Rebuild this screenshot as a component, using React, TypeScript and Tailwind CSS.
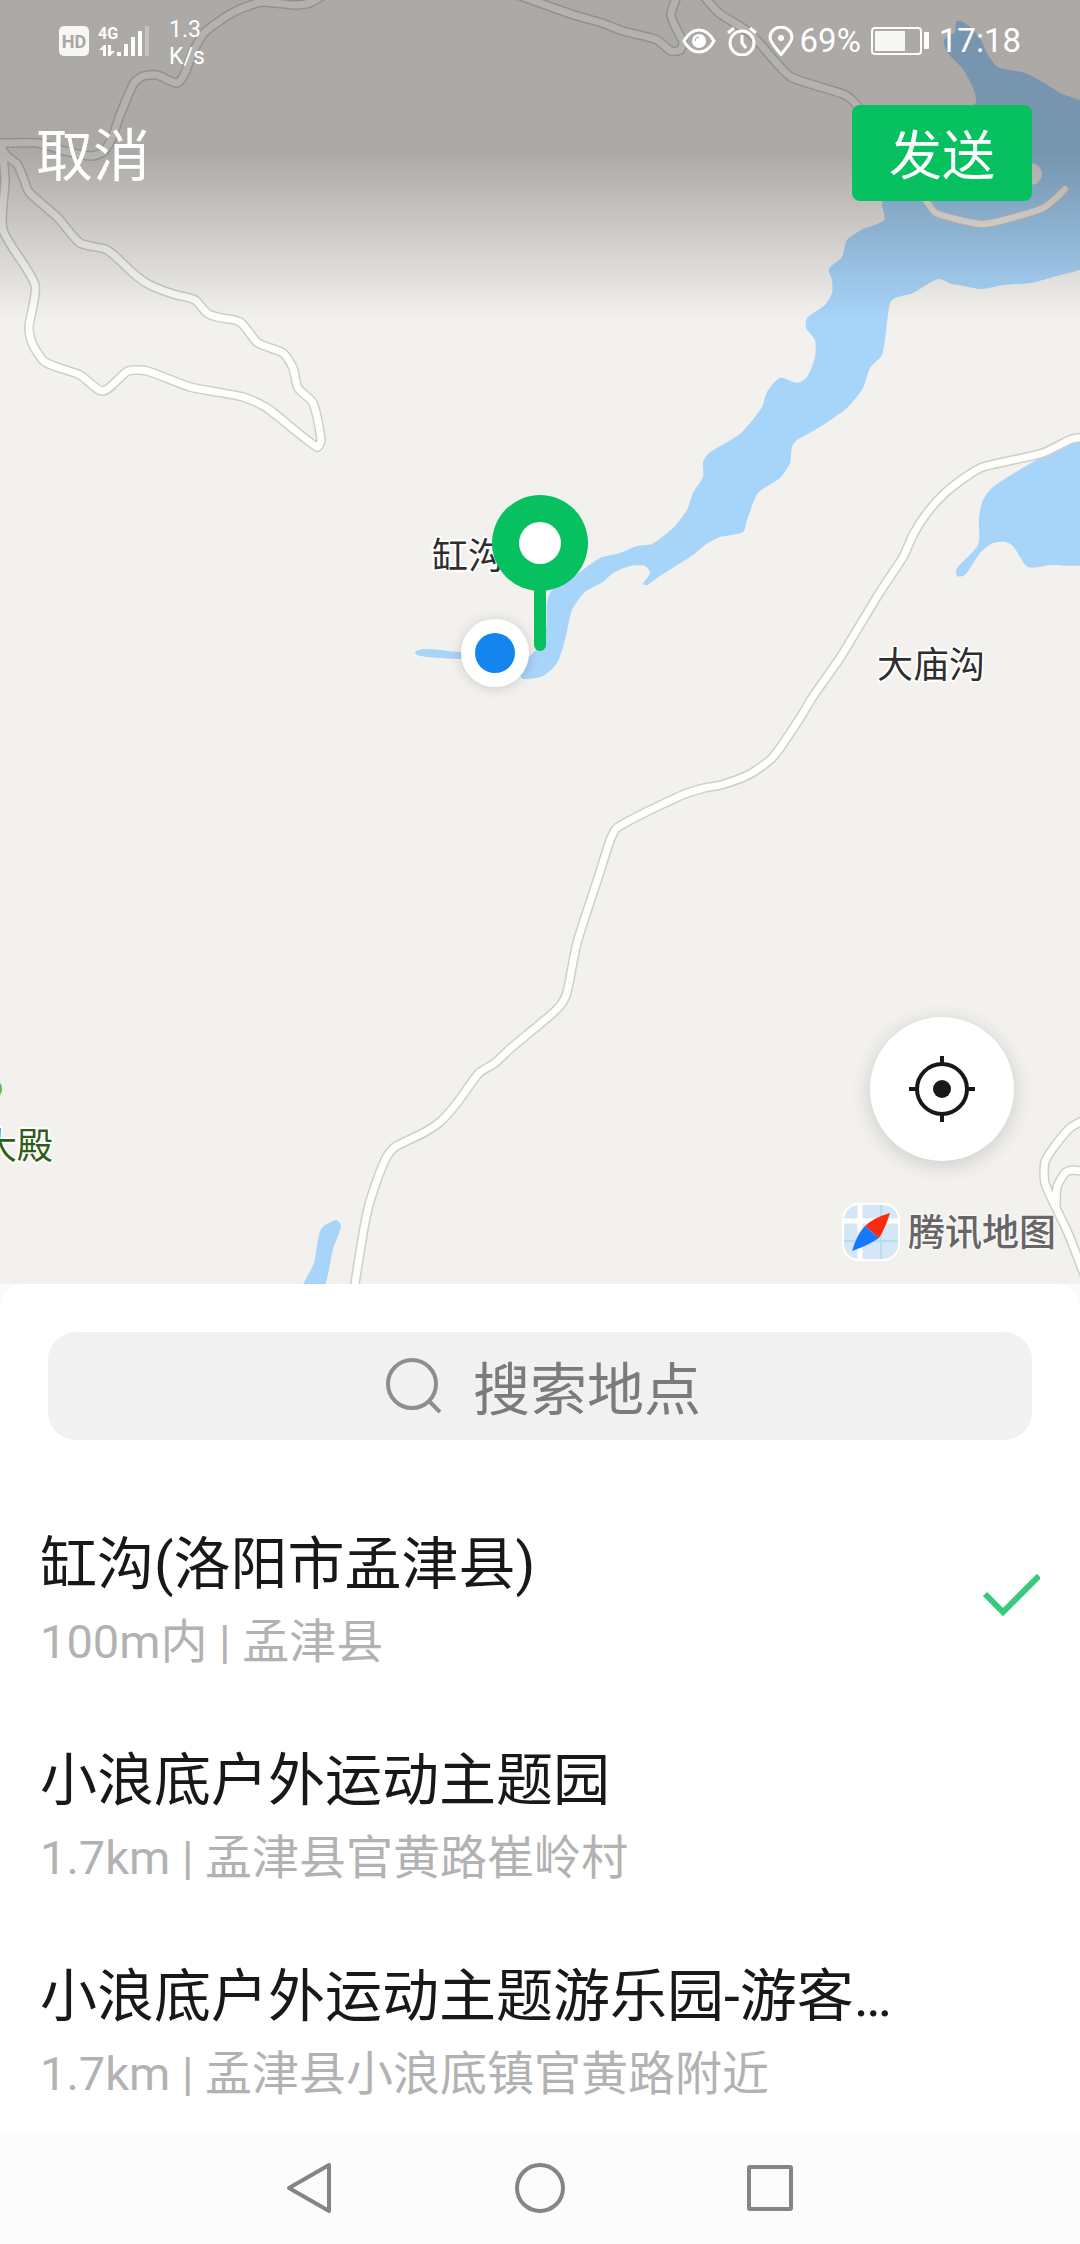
import { useState } from "react"

type Point = [number, number]

const places = [
  { id: 1, name: "缸沟(洛阳市孟津县)", detail: "100m内 | 孟津县" },
  { id: 2, name: "小浪底户外运动主题园", detail: "1.7km | 孟津县官黄路崔岭村" },
  { id: 3, name: "小浪底户外运动主题游乐园-游客…", detail: "1.7km | 孟津县小浪底镇官黄路附近" },
]

const roads: Point[][] = [
  [[-10, 143], [15, 143], [38, 143], [65, 151], [91, 156], [103, 152], [112, 138], [120, 115], [134, 83], [143, 76], [157, 75], [177, 83], [184, 75], [193, 52], [205, 32], [234, 12], [262, 2], [293, 5], [310, 3], [325, -6]],
  [[-4, 140], [7, 156], [17, 164], [23, 177], [29, 192], [58, 218], [80, 243], [105, 249], [115, 256], [133, 273], [148, 284], [173, 294], [195, 300], [207, 313], [217, 317], [240, 322], [258, 343], [283, 353], [293, 368], [298, 388], [313, 403], [321, 440], [317, 447], [267, 408], [243, 397], [190, 387], [147, 371], [128, 371], [103, 391], [80, 375], [45, 362], [32, 343], [29, 327], [35, 285], [3, 230], [5, 180], [2, 146]],
  [[515, -6], [540, 3], [574, 15], [602, 23], [623, 31], [657, 40], [671, 51], [680, 50], [683, 42], [678, 32], [671, 15], [677, -4]],
  [[702, -6], [719, 13], [750, 33], [774, 60], [791, 77], [843, 94], [852, 100], [870, 120]],
  [[1090, 437], [1072, 439], [1043, 453], [983, 467], [967, 476], [945, 493], [927, 513], [913, 535], [903, 557], [880, 592], [857, 630], [840, 658], [812, 698], [800, 718], [773, 757], [750, 774], [721, 785], [704, 788], [680, 796], [618, 827], [611, 838], [598, 878], [577, 943], [568, 988], [564, 1000], [554, 1012], [511, 1048], [495, 1063], [479, 1073], [457, 1103], [441, 1121], [425, 1132], [395, 1147], [386, 1158], [371, 1198], [364, 1228], [354, 1290]],
  [[1090, 1117], [1070, 1128], [1054, 1147], [1045, 1162], [1045, 1183], [1058, 1212], [1068, 1233], [1084, 1274]],
  [[1056, 1206], [1057, 1187], [1065, 1173], [1072, 1170], [1086, 1172]],
]

const waters: Point[][] = [
  [[957, 21], [969, 26], [981, 40], [988, 55], [998, 67], [1025, 73], [1046, 84], [1060, 93], [1090, 108], [1090, 262], [1053, 277], [1030, 283], [1003, 285], [982, 289], [963, 286], [952, 284], [938, 279], [913, 293], [895, 298], [890, 303], [887, 323], [882, 355], [870, 368], [863, 388], [847, 408], [820, 427], [797, 440], [792, 447], [790, 463], [780, 478], [758, 493], [747, 520], [743, 532], [720, 537], [705, 545], [693, 555], [660, 576], [647, 585], [643, 584], [650, 573], [645, 566], [630, 566], [613, 573], [603, 582], [585, 592], [572, 610], [565, 640], [557, 663], [543, 676], [523, 679], [520, 673], [528, 658], [538, 648], [546, 630], [547, 603], [552, 590], [580, 572], [600, 558], [620, 553], [637, 546], [652, 544], [673, 528], [687, 510], [693, 493], [703, 477], [703, 462], [709, 453], [741, 433], [762, 407], [767, 392], [780, 378], [797, 383], [807, 377], [815, 357], [815, 340], [806, 328], [807, 318], [825, 305], [832, 293], [832, 280], [829, 269], [842, 257], [847, 240], [863, 229], [884, 220], [882, 203], [900, 150], [975, 104], [965, 72], [948, 53], [944, 40], [955, 32]],
  [[1090, 440], [1067, 446], [1033, 462], [993, 487], [983, 500], [979, 517], [978, 545], [957, 568], [957, 576], [965, 575], [980, 553], [993, 543], [1005, 542], [1013, 546], [1028, 567], [1050, 565], [1090, 561]],
  [[415, 653], [425, 649], [460, 652], [480, 652], [480, 659], [427, 657]],
  [[321, 1229], [336, 1220], [341, 1226], [333, 1249], [322, 1292], [302, 1292], [314, 1263]],
]

const causeway: Point[] = [[920, 190], [927, 202], [936, 213], [982, 224], [1015, 217], [1043, 208], [1056, 198], [1065, 189]]

// Smooth curve that runs through every point
function curve(points: Point[], closed = false) {
  const n = points.length
  const at = (i: number) => (closed ? points[(i + n) % n] : points[Math.max(0, Math.min(n - 1, i))])
  let d = `M${points[0][0]} ${points[0][1]}`
  for (let i = 0; i < (closed ? n : n - 1); i++) {
    const [a, b, c, e] = [at(i - 1), at(i), at(i + 1), at(i + 2)]
    const limit = Math.hypot(c[0] - b[0], c[1] - b[1]) / 4.5
    const t1 = Math.hypot(c[0] - a[0], c[1] - a[1]) || 1
    const t2 = Math.hypot(e[0] - b[0], e[1] - b[1]) || 1
    const x1 = b[0] + ((c[0] - a[0]) / t1) * limit
    const y1 = b[1] + ((c[1] - a[1]) / t1) * limit
    const x2 = c[0] - ((e[0] - b[0]) / t2) * limit
    const y2 = c[1] - ((e[1] - b[1]) / t2) * limit
    d += `C${x1.toFixed(1)} ${y1.toFixed(1)} ${x2.toFixed(1)} ${y2.toFixed(1)} ${c[0]} ${c[1]}`
  }
  return closed ? d + "Z" : d
}

function MapCanvas() {
  return (
    <svg
      className="absolute inset-0 h-full w-full"
      viewBox="0 0 1080 1284"
      preserveAspectRatio="xMidYMid slice"
      role="img"
      aria-label="地图"
    >
      <defs>
        <linearGradient id="shade" x1="0" y1="0" x2="0" y2="1">
          <stop offset="0" stopColor="#060200" stopOpacity="0.3" />
          <stop offset="0.48" stopColor="#060200" stopOpacity="0.3" />
          <stop offset="1" stopColor="#060200" stopOpacity="0" />
        </linearGradient>
        <filter id="glow" x="-50%" y="-50%" width="200%" height="200%">
          <feDropShadow dx="0" dy="1" stdDeviation="6" floodOpacity="0.18" />
        </filter>
      </defs>
      <rect width="1080" height="1284" fill="#f3f1ee" />
      <g fill="#a7d4f9">
        {waters.map((points, index) => (
          <path key={index} d={curve(points, true)} />
        ))}
      </g>
      <ellipse cx="1030" cy="174" rx="12" ry="11" fill="#f3f1ee" />
      <g fill="none" strokeLinecap="round" strokeLinejoin="round">
        <path d={curve(causeway)} stroke="#d9cfc8" strokeWidth="8" />
        <path d={curve(causeway)} stroke="#f7f3ef" strokeWidth="6" />
        {roads.map((points, index) => (
          <path key={index} d={curve(points)} stroke="#cfcecb" strokeWidth="10" />
        ))}
        {roads.map((points, index) => (
          <path key={index} d={curve(points)} stroke="#fefefb" strokeWidth="7" />
        ))}
      </g>
      <rect width="1080" height="320" fill="url(#shade)" />
      <g
        className="font-['Noto_Sans_CJK_SC',sans-serif] text-[36px]"
        fill="#2e2e2e"
        stroke="#ffffff"
        strokeWidth="4"
        strokeLinejoin="round"
        paintOrder="stroke"
      >
        <text x="432" y="569">缸沟</text>
        <text x="877" y="678">大庙沟</text>
        <text x="-19" y="1159" fill="#2f5c17">大殿</text>
      </g>
      <circle cx="-9" cy="1089" r="11" fill="#5cb85a" />
      <circle cx="495" cy="653" r="34" fill="#ffffff" filter="url(#glow)" />
      <circle cx="495" cy="653" r="20" fill="#1485ef" />
      <path d="M540 570V645" stroke="#07c160" strokeWidth="12" strokeLinecap="round" />
      <circle cx="540" cy="543" r="48" fill="#07c160" />
      <circle cx="540" cy="543" r="21" fill="#ffffff" />
    </svg>
  )
}

function StatusBar() {
  return (
    <div className="flex h-[82px] items-center justify-between pr-[59px] pl-[59px] font-[Roboto,sans-serif] text-white">
      <div className="flex items-center">
        <svg className="h-[30px] w-[92px] overflow-visible" viewBox="0 0 92 30" fill="currentColor">
          <rect width="30" height="30" rx="5" fill="#f7f7f5" />
          <text x="15" y="22" textAnchor="middle" className="text-[18px] font-bold" fill="#a9a6a3">HD</text>
          <text x="39" y="13" className="text-[16px] font-bold">4G</text>
          <path d="M40 24l5-5h2v11h-3v-6zM49 19h3v6h4l-5 5h-2z" />
          <path d="M58 26h4v4h-4zM65 18h4v12h-4zM72 11h4v19h-4zM79 5h4v25h-4z" />
          <path d="M86 0h4v30h-4z" opacity="0.3" />
        </svg>
        <div className="ml-[18px] pt-1 text-[23px] leading-[27px]">
          <div>1.3</div>
          <div>K/s</div>
        </div>
      </div>
      <div className="flex items-center text-[33px] leading-10">
        <svg className="h-[30px] w-[114px]" viewBox="0 0 114 30" fill="none" stroke="currentColor" strokeWidth="3">
          <path d="M2 15Q8 4 17 4Q26 4 32 15Q26 26 17 26Q8 26 2 15Z" />
          <circle cx="17" cy="15" r="7" fill="currentColor" stroke="none" />
          <path d="M13 15a4 4 0 0 1 4-4" stroke="#a9a6a3" strokeWidth="1" />
          <circle cx="60" cy="17" r="12" />
          <path d="M60 9v8l4 5M46 7l6-5M74 7l-6-5" />
          <path d="M99 28.500C93 21 88 16 88 11.500a11 10.500 0 0 1 22 0C110 16 105 21 99 28.500Z" />
          <circle cx="99" cy="12" r="3" fill="currentColor" stroke="none" />
        </svg>
        <span className="ml-1">69%</span>
        <svg className="ml-[10px] h-7 w-[58px]" viewBox="0 0 58 28" fill="none">
          <rect x="1" y="1" width="49" height="26" rx="3" stroke="white" strokeWidth="2" />
          <rect x="4" y="4" width="30" height="20" fill="#f7f7f5" />
          <rect x="53" y="5" width="5" height="17" rx="1" fill="white" />
        </svg>
        <span className="ml-[10px]">17:18</span>
      </div>
    </div>
  )
}

function MapLogo() {
  return (
    <svg className="size-[58px]" viewBox="0 0 58 58">
      <rect width="58" height="58" rx="17" fill="#ffffff" />
      <rect x="2" y="2" width="54" height="54" rx="15" fill="#d5e6f7" />
      <path d="M39 2V56M2 38H56" stroke="#b7dfe8" strokeWidth="2" />
      <path d="M18 2V56M2 18H56" stroke="#ffffff" strokeWidth="5" />
      <path d="M48 10Q31 15 23 23L37 35Q43 26 48 10Z" fill="#fa2c0c" />
      <path d="M10 48Q15 31 23 23L37 35Q27 42 10 48Z" fill="#1677ff" />
    </svg>
  )
}

export default function App() {
  const [selected, setSelected] = useState(1)

  return (
    <main className="flex min-h-screen flex-col bg-[#fafafa] font-[Roboto,'Noto_Sans_CJK_SC',sans-serif]">
      <section className="relative flex flex-1 flex-col overflow-hidden bg-[#f3f1ee]">
        <MapCanvas />
        <div className="relative flex flex-1 flex-col">
          <StatusBar />
          <header className="mt-[23px] flex h-24 items-center justify-between pr-12 pl-9 text-white">
            <button type="button" className="pt-2 text-[57px] leading-[72px]">取消</button>
            <button type="button" className="h-24 w-[180px] rounded-lg bg-[#07c160] pt-2 text-[53px] leading-[72px]">发送</button>
          </header>
          <div className="mt-auto flex flex-col items-end gap-[42px] pr-6 pb-[23px]">
            <button
              type="button"
              aria-label="回到当前位置"
              className="mr-[42px] flex size-36 items-center justify-center rounded-full bg-white shadow-[0_4px_20px_rgba(0,0,0,0.16)]"
            >
              <svg className="size-[66px]" viewBox="0 0 66 66" fill="none" stroke="#181818" strokeWidth="4">
                <circle cx="33" cy="33" r="25" strokeWidth="4" />
                <circle cx="33" cy="33" r="9" fill="#181818" stroke="none" />
                <path d="M33 0V8M33 58V66M0 33H8M58 33H66" />
              </svg>
            </button>
            <div className="flex items-center gap-2">
              <MapLogo />
              <span className="pt-1 text-[37px] leading-[54px] font-medium text-[#666] [text-shadow:0_0_3px_white,0_0_3px_white]">腾讯地图</span>
            </div>
          </div>
        </div>
      </section>

      <section className="rounded-t-3xl bg-white px-10">
        <label className="mx-2 mt-12 flex h-[108px] items-center justify-center gap-8 rounded-[28px] bg-[#f1f1f1]">
          <svg className="size-16 text-[#8e8e8e]" viewBox="0 0 64 64" fill="none" stroke="currentColor" strokeWidth="4">
            <circle cx="35" cy="30" r="24" />
            <path d="M52 47L63 58" />
          </svg>
          <input
            type="text"
            aria-label="搜索地点"
            placeholder="搜索地点"
            className="h-[88px] w-[230px] bg-transparent pt-2 text-[57px] text-[#181818] outline-none placeholder:text-[#7b7b7b]"
          />
        </label>
        <ul className="flex flex-col gap-12 pt-[76px] pb-[15px]">
          {places.map((place) => (
            <li key={place.id}>
              <button
                type="button"
                aria-pressed={selected === place.id}
                onClick={() => setSelected(place.id)}
                className="flex h-[168px] w-full items-start justify-between text-left"
              >
                <span className="flex min-w-0 flex-col pt-[5px]">
                  <span className="truncate text-[57px] leading-[88px] text-[#181818]">{place.name}</span>
                  <span className="truncate text-[47px] leading-[66px] text-[#b2b2b2]">{place.detail}</span>
                </span>
                {selected === place.id && (
                  <svg className="mt-[58px] h-[42px] w-[58px] shrink-0" viewBox="0 0 58 42" fill="none" stroke="#38c97c" strokeWidth="6">
                    <path d="M3 20L21 38L57 2" />
                  </svg>
                )}
              </button>
            </li>
          ))}
        </ul>
      </section>

      <nav className="flex h-[113px] items-center justify-center bg-[#fcfcfc] text-[#858585]">
        <button type="button" aria-label="返回" className="flex w-[230px] justify-center">
          <svg className="size-[52px]" viewBox="0 0 52 52" fill="none" stroke="currentColor" strokeWidth="4" strokeLinejoin="round">
            <path d="M45 3V49L5 26Z" />
          </svg>
        </button>
        <button type="button" aria-label="主页" className="flex w-[230px] justify-center">
          <svg className="size-[52px]" viewBox="0 0 52 52" fill="none" stroke="currentColor" strokeWidth="4">
            <circle cx="26" cy="26" r="23" />
          </svg>
        </button>
        <button type="button" aria-label="最近任务" className="flex w-[230px] justify-center">
          <svg className="size-[52px]" viewBox="0 0 52 52" fill="none" stroke="currentColor" strokeWidth="4">
            <rect x="5" y="5" width="42" height="42" rx="1" />
          </svg>
        </button>
      </nav>
    </main>
  )
}
